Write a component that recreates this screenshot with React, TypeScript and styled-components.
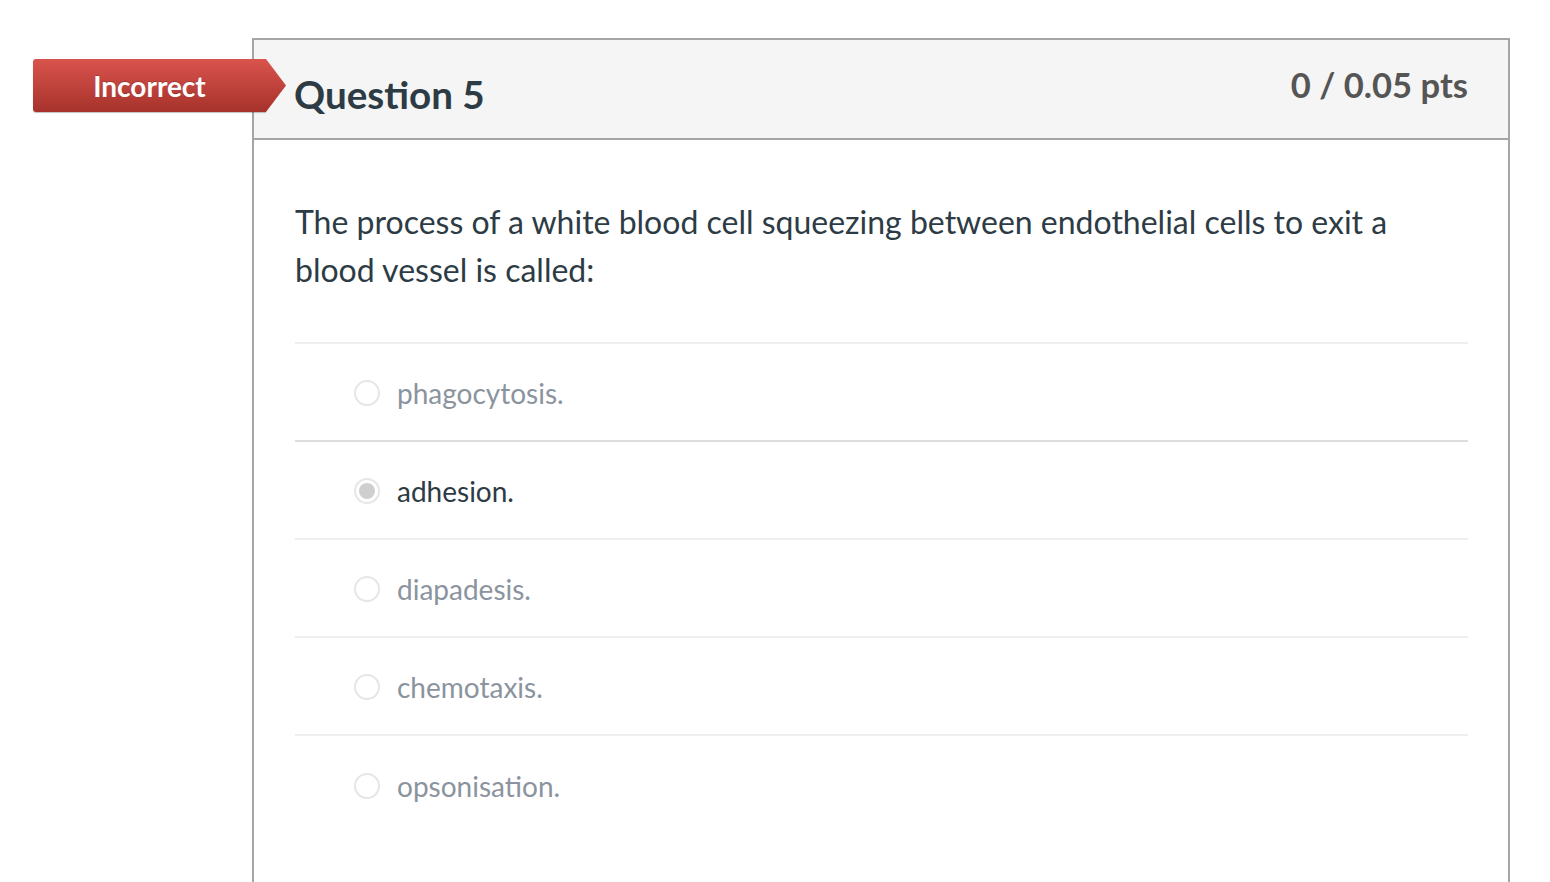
import styled, { createGlobalStyle } from "styled-components";

const GlobalStyle = createGlobalStyle`
  html, body {
    margin: 0;
    padding: 0;
    background: #fff;
    font-family: Lato, "Noto Sans", sans-serif;
    color: #2d3b45;
  }
`;

const answers = [
  { text: "phagocytosis.", selected: false },
  { text: "adhesion.", selected: true },
  { text: "diapadesis.", selected: false },
  { text: "chemotaxis.", selected: false },
  { text: "opsonisation.", selected: false },
];

const Page = styled.div`
  padding: 38px 40px 0 252px;
  height: 882px;
  box-sizing: border-box;
  overflow: hidden;
`;

const Card = styled.div`
  position: relative;
  border: 2px solid #a5a5a5;
  border-bottom: none;
  min-height: 900px;
`;

const Header = styled.div`
  display: flex;
  justify-content: space-between;
  align-items: flex-start;
  background: #f5f5f5;
  border-bottom: 2px solid #a5a5a5;
  height: 100px;
  box-sizing: border-box;
  padding: 0 40px 0 41px;
`;

const Title = styled.h2`
  margin: 31px 0 0 -1px;
  font-size: 38.6px;
  font-weight: 700;
  line-height: 46px;
  color: #2d3b45;
`;

const Points = styled.div`
  margin-top: 22px;
  font-size: 34.6px;
  font-weight: 700;
  line-height: 46px;
  color: #555;
`;

const Badge = styled.div`
  position: absolute;
  left: -221px;
  top: 19px;
  width: 233px;
  height: 53px;
  display: flex;
  align-items: center;
  justify-content: center;
  background: linear-gradient(#d9544d, #a6322b);
  border-radius: 3px 0 0 3px;
  color: #fff;
  font-size: 28px;
  font-weight: 700;
  text-shadow: 0 -1px 0 rgba(0, 0, 0, 0.2);
  box-shadow: 0 1px 1px rgba(0, 0, 0, 0.25);

  &::after {
    content: "";
    position: absolute;
    right: -20px;
    top: 0;
    width: 20px;
    height: 53px;
    background: linear-gradient(#d9544d, #a6322b);
    clip-path: polygon(0 0, 100% 50%, 0 100%);
  }
`;

const Body = styled.div`
  padding: 0 40px 0 41px;
`;

const QuestionText = styled.p`
  margin: 58px 0 48px;
  font-size: 32px;
  line-height: 48px;
  color: #2d3b45;
`;

const AnswerList = styled.div`
  border-top: 2px solid #eeeeee;
`;

const AnswerRow = styled.div<{ $strong: boolean }>`
  display: flex;
  align-items: center;
  height: 98px;
  box-sizing: border-box;
  padding: 2px 0 0 59px;
  border-bottom: 2px solid ${(p) => (p.$strong ? "#dddddd" : "#eeeeee")};
  &:last-child {
    border-bottom: none;
  }
`;

const Radio = styled.span<{ $selected: boolean }>`
  width: 22px;
  height: 22px;
  border-radius: 50%;
  border: 2px solid #e6e6e6;
  background: #fff;
  margin-right: 17px;
  flex-shrink: 0;
  display: flex;
  align-items: center;
  justify-content: center;
  &::after {
    content: "";
    display: ${(p) => (p.$selected ? "block" : "none")};
    width: 16px;
    height: 16px;
    border-radius: 50%;
    background: #cfcfcf;
  }
`;

const AnswerText = styled.span<{ $selected: boolean }>`
  font-size: 28px;
  color: ${(p) => (p.$selected ? "#2d3b45" : "#8b949e")};
`;

export default function App() {
  return (
    <>
      <GlobalStyle />
      <Page>
        <Card>
          <Badge>Incorrect</Badge>
          <Header>
            <Title>Question 5</Title>
            <Points>0 / 0.05 pts</Points>
          </Header>
          <Body>
            <QuestionText>
              The process of a white blood cell squeezing between endothelial
              cells to exit a blood vessel is called:
            </QuestionText>
            <AnswerList>
              {answers.map((a, i) => (
                <AnswerRow key={a.text} $strong={i === 0}>
                  <Radio $selected={a.selected} />
                  <AnswerText $selected={a.selected}>{a.text}</AnswerText>
                </AnswerRow>
              ))}
            </AnswerList>
          </Body>
        </Card>
      </Page>
    </>
  );
}
